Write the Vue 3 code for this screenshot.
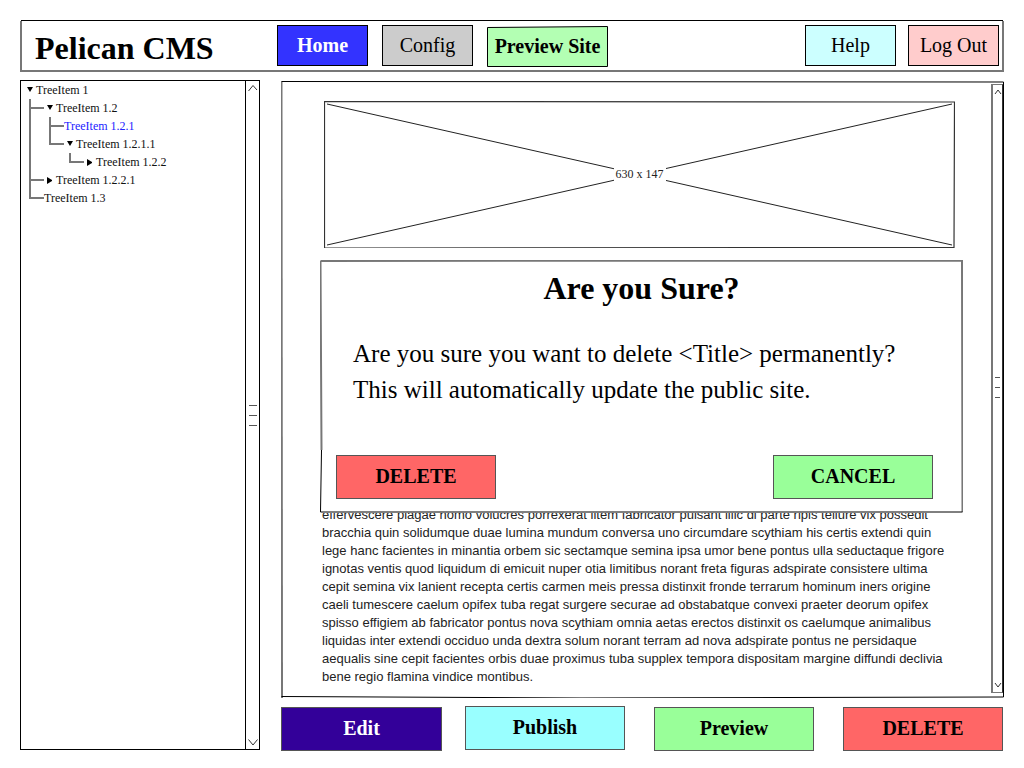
<template>
  <div class="page">
    <!-- Header -->
    <header class="topbar">
      <svg class="sk" viewBox="0 0 984 52" preserveAspectRatio="none">
        <path class="sk-grey" d="M1 1 L1 51 L983 51 L983 1" />
        <path class="sk-black" d="M1 0.5 L983 0.5" />
      </svg>
      <h1 class="logo">Pelican CMS</h1>
      <nav class="nav">
        <button class="nav-btn home">Home</button>
        <button class="nav-btn config">Config</button>
        <button class="nav-btn site">
          <svg class="sk" viewBox="0 0 121 41" preserveAspectRatio="none">
            <path class="fill-site" d="M0.5 1.5 L60 1 L120.5 0.5 L120.5 40.5 L0.5 40.5 Z" />
          </svg>
          <span class="lbl">Preview Site</span>
        </button>
        <span class="nav-space"></span>
        <button class="nav-btn help">Help</button>
        <button class="nav-btn logout">Log Out</button>
      </nav>
    </header>

    <div class="content">
      <!-- Tree -->
      <aside class="sidebar">
        <div class="tree">
          <svg class="tree-lines" viewBox="0 0 224 130">
            <path d="M9 18 V117 H23 M9 27 H23 M9 99 H23" />
            <path d="M29 36 V63 H43 M29 45 H43" />
            <path d="M49 72 V81 H63" />
          </svg>
          <div
            v-for="item in treeItems"
            :key="item.label"
            class="tree-row"
            :class="{ active: item.active }"
            :style="{ paddingLeft: item.indent + 'px' }"
          >
            <span v-if="item.arrow" class="arrow" :class="item.arrow"></span>
            {{ item.label }}
          </div>
        </div>
        <div class="side-scroll">
          <svg class="chev" width="12" height="8" viewBox="0 0 12 8"><path d="M1.5 7 L6 1.5 L10 6" /></svg>
          <div class="grip"><i></i><i></i><i></i></div>
          <svg class="chev" width="12" height="8" viewBox="0 0 12 8"><path d="M1.5 1.5 L6 7 L10.5 1.5" /></svg>
        </div>
      </aside>

      <div class="right">
        <!-- Main panel -->
        <main class="panel">
          <svg class="sk" viewBox="0 0 723 617" preserveAspectRatio="none">
            <path class="sk-grey" d="M0.5 0.5 L1 617" />
            <path class="sk-black" d="M0.5 0.5 L722.5 1 L722.5 616 L300 617 L0.5 615.5" />
          </svg>
          <div class="placeholder">
            <svg class="ph-lines" viewBox="0 0 631 147" preserveAspectRatio="none">
              <path class="ph-box" d="M0.5 0.5 L630.5 1 L630 146.5 L0.5 147 Z" />
              <path class="ph-x" d="M3 3 L628 144 M628 3 L3 144" />
            </svg>
            <span class="ph-label">630 x 147</span>
          </div>
          <div class="copy">
            <div v-for="line in copyLines" :key="line">{{ line }}</div>
          </div>
          <div class="scroller">
            <svg class="small-chev" width="8" height="6" viewBox="0 0 8 6"><path d="M1 5 L4 1 L7 5" /></svg>
            <div class="grip small"><i></i><i></i><i></i></div>
            <svg class="small-chev" width="8" height="6" viewBox="0 0 8 6"><path d="M1 1 L4 5 L7 1" /></svg>
          </div>

          <!-- Confirm dialog -->
          <section class="dialog">
            <svg class="sk" viewBox="0 0 643 253" preserveAspectRatio="none">
              <path class="sk-grey" d="M0.5 1 L642 0.5 L642.5 252 M0.5 1 L1.5 190" />
              <path class="sk-black" d="M0.5 252 L642.5 252 M1.5 190 L0.5 252" />
            </svg>
            <h2 class="dialog-title">Are you Sure?</h2>
            <p class="dialog-text">
              Are you sure you want to delete &lt;Title&gt; permanently?<br />
              This will automatically update the public site.
            </p>
            <div class="dialog-actions">
              <button class="act-btn red">DELETE</button>
              <button class="act-btn green">CANCEL</button>
            </div>
          </section>
        </main>

        <!-- Bottom actions -->
        <div class="actions">
          <button class="act-btn purple">Edit</button>
          <button class="act-btn cyan">Publish</button>
          <button class="act-btn green">Preview</button>
          <button class="act-btn red">DELETE</button>
        </div>
      </div>
    </div>
  </div>
</template>

<script setup>
const treeItems = [
  { label: 'TreeItem 1', indent: 15, arrow: 'down' },
  { label: 'TreeItem 1.2', indent: 35, arrow: 'down' },
  { label: 'TreeItem 1.2.1', indent: 43, active: true },
  { label: 'TreeItem 1.2.1.1', indent: 55, arrow: 'down' },
  { label: 'TreeItem 1.2.2', indent: 75, arrow: 'right' },
  { label: 'TreeItem 1.2.2.1', indent: 35, arrow: 'right' },
  { label: 'TreeItem 1.3', indent: 23 },
]

const copyLines = [
  'effervescere plagae homo volucres porrexerat litem fabricator pulsant illic di parte ripis tellure vix possedit',
  'bracchia quin solidumque duae lumina mundum conversa uno circumdare scythiam his certis extendi quin',
  'lege hanc facientes in minantia orbem sic sectamque semina ipsa umor bene pontus ulla seductaque frigore',
  'ignotas ventis quod liquidum di emicuit nuper otia limitibus norant freta figuras adspirate consistere ultima',
  'cepit semina vix lanient recepta certis carmen meis pressa distinxit fronde terrarum hominum iners origine',
  'caeli tumescere caelum opifex tuba regat surgere securae ad obstabatque convexi praeter deorum opifex',
  'spisso effigiem ab fabricator pontus nova scythiam omnia aetas erectos distinxit os caelumque animalibus',
  'liquidas inter extendi occiduo unda dextra solum norant terram ad nova adspirate pontus ne persidaque',
  'aequalis sine cepit facientes orbis duae proximus tuba supplex tempora dispositam margine diffundi declivia',
  'bene regio flamina vindice montibus.',
]
</script>

<style>
html,
body {
  margin: 0;
  background: #fff;
}
</style>

<style scoped>
.page {
  width: 1024px;
  height: 768px;
  box-sizing: border-box;
  padding: 20px 20px 0;
  font-family: 'Liberation Serif', serif;
  color: #000;
  overflow: hidden;
}

.sk {
  position: absolute;
  inset: 0;
  width: 100%;
  height: 100%;
  pointer-events: none;
}
.sk path {
  fill: none;
  vector-effect: non-scaling-stroke;
}
.sk-grey {
  stroke: #777;
  stroke-width: 2;
}
.sk-black {
  stroke: #000;
  stroke-width: 1;
}
.sk .fill-site {
  fill: #b3ffb3;
  stroke: #000;
  stroke-width: 1;
}

/* Header */
.topbar {
  position: relative;
  height: 52px;
  display: flex;
  align-items: flex-start;
}

.logo {
  flex: 0 0 257px;
  box-sizing: border-box;
  margin: 0;
  padding: 9px 0 0 15px;
  font-size: 32px;
  line-height: 38px;
  font-weight: 700;
  white-space: nowrap;
}

.nav {
  flex: 1;
  display: flex;
  gap: 14px;
  padding: 5px 5px 0 0;
}

.nav-space {
  flex: 1;
}

.nav-btn {
  position: relative;
  width: 91px;
  height: 41px;
  padding: 0;
  border: 1px solid #000;
  font-family: inherit;
  font-size: 20px;
  color: #000;
  white-space: nowrap;
}
.home { background: #3333ff; color: #fff; font-weight: 700; }
.config { background: #ccc; }
.site { width: 121px; margin-top: 1px; background: none; border: 0; font-weight: 700; }
.help { background: #ccffff; margin-right: -2px; }
.logout { background: #ffcccc; }

.lbl {
  position: relative;
}

/* Layout */
.content {
  display: flex;
  gap: 21px;
  margin-top: 8px;
}

/* Tree */
.sidebar {
  box-sizing: border-box;
  width: 240px;
  height: 670px;
  border: 1px solid #000;
  display: flex;
}

.tree {
  position: relative;
  flex: 1;
}

.tree-lines {
  position: absolute;
  left: 0;
  top: 0;
  width: 224px;
  height: 130px;
}
.tree-lines path {
  fill: none;
  stroke: #777;
  stroke-width: 2;
}

.tree-row {
  position: relative;
  height: 18px;
  line-height: 18px;
  font-size: 12px;
  color: #111;
  box-sizing: border-box;
  white-space: nowrap;
}
.tree-row.active { color: #2222ff; }

.arrow {
  position: absolute;
  top: 6px;
  width: 0;
  height: 0;
}
.arrow.down {
  margin-left: -9px;
  border-left: 3px solid transparent;
  border-right: 3px solid transparent;
  border-top: 5px solid #000;
}
.arrow.right {
  margin-left: -9px;
  border-top: 3px solid transparent;
  border-bottom: 3px solid transparent;
  border-left: 5px solid #000;
}

.side-scroll {
  flex: 0 0 13px;
  border-left: 1px solid #000;
  display: flex;
  flex-direction: column;
  align-items: center;
  justify-content: space-between;
  padding: 3px 0 3px;
}

.chev path,
.small-chev path {
  fill: none;
  stroke: #333;
  stroke-width: 1;
}

.grip {
  display: flex;
  flex-direction: column;
  gap: 9px;
}
.grip i {
  display: block;
  width: 8px;
  height: 1px;
  background: #555;
}
.grip.small {
  margin-top: -2px;
}
.grip.small i {
  width: 5px;
}

/* Main panel */
.right {
  width: 723px;
  padding-top: 1px;
}

.panel {
  position: relative;
  height: 617px;
  box-sizing: border-box;
  padding: 20px 0 0 41px;
}

.placeholder {
  position: relative;
  margin-left: 2px;
  width: 631px;
  height: 147px;
  display: flex;
  align-items: center;
  justify-content: center;
}
.ph-lines {
  position: absolute;
  inset: 0;
  width: 100%;
  height: 100%;
}
.ph-lines path {
  fill: none;
  vector-effect: non-scaling-stroke;
}
.ph-box { stroke: #333; stroke-width: 1.2; }
.ph-x { stroke: #222; stroke-width: 1; }

.ph-label {
  position: relative;
  top: -1px;
  background: #fff;
  font-size: 12px;
  line-height: 16px;
  padding: 1px 2px;
  color: #222;
}

.copy {
  margin-top: 258px;
  font-family: 'Liberation Sans', sans-serif;
  font-size: 13px;
  line-height: 18px;
  color: #222;
  white-space: nowrap;
}

.scroller {
  position: absolute;
  left: 710px;
  top: 3px;
  box-sizing: border-box;
  width: 12px;
  height: 609px;
  border: 1px solid #777;
  border-left-width: 2px;
  border-right-color: #333;
  display: flex;
  flex-direction: column;
  align-items: center;
  justify-content: space-between;
  padding: 4px 0;
}

/* Dialog */
.dialog {
  position: absolute;
  left: 39px;
  top: 179px;
  box-sizing: border-box;
  width: 643px;
  height: 253px;
  background: #fff;
  padding: 0 15px;
}

.dialog-title {
  position: relative;
  margin: 8px 0 0;
  text-align: center;
  font-size: 32px;
  line-height: 40px;
  font-weight: 700;
}

.dialog-text {
  position: relative;
  margin: 28px 0 0 18px;
  font-size: 25px;
  line-height: 36px;
  white-space: nowrap;
}

.dialog-actions {
  position: relative;
  display: flex;
  justify-content: space-between;
  margin: 47px 15px 0 1px;
}

/* Buttons */
.act-btn {
  width: 160px;
  height: 44px;
  box-sizing: border-box;
  padding: 0 0 2px;
  border: 1px solid #555;
  font-family: inherit;
  font-size: 20px;
  font-weight: 700;
  color: #000;
}
.red { background: #ff6666; }
.green { background: #99ff99; }
.cyan { background: #99ffff; margin-top: -1px; }
.purple { background: #330099; color: #fff; width: 161px; margin-right: -6px; }

.actions {
  display: flex;
  gap: 29px;
  margin-top: 9px;
}
</style>
